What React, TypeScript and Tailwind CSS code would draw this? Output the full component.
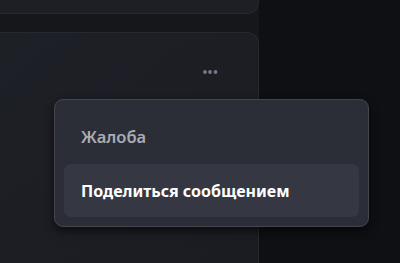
const App = () => {
  return (
    <div
      className="relative flex h-[263px] w-[400px] overflow-hidden bg-[#0f1014]"
      style={{ fontFamily: '"Noto Sans", "Open Sans", sans-serif' }}
    >
      <div className="flex w-[259px] flex-col gap-[18px] bg-[#16171b]">
        <div className="-mt-6 h-[38px] rounded-br-[12px] border-b border-r border-[#262830] bg-[#1d1f25]" />
        <div className="relative flex-1 rounded-tr-[12px] border-r border-t border-[#262830] bg-gradient-to-br from-[#1e2027] to-[#1b1c21]">
          <button className="absolute left-[202px] top-[33px] flex h-3 w-4 items-center justify-center">
            <svg width="16" height="6" viewBox="0 0 16 6" fill="#727a89">
              <circle cx="3" cy="3" r="1.9" />
              <circle cx="8" cy="3" r="1.9" />
              <circle cx="13.5" cy="3" r="1.9" />
            </svg>
          </button>
        </div>
      </div>

      <div className="absolute left-[54px] top-[99px] flex w-[315px] flex-col rounded-[9px] border border-[#43464e] bg-[#2b2e37] p-[9px] shadow-[0_4px_10px_rgba(0,0,0,0.6)]">
        <div className="flex h-[55px] items-center px-[17px] pt-[1px] text-[16.5px] font-semibold text-[#a9acb4]">
          Жалоба
        </div>
        <div className="flex h-[53px] items-center rounded-[7px] bg-[#353842] px-[17px] text-[16px] font-bold text-white">
          Поделиться сообщением
        </div>
      </div>
    </div>
  );
};

export default App;
